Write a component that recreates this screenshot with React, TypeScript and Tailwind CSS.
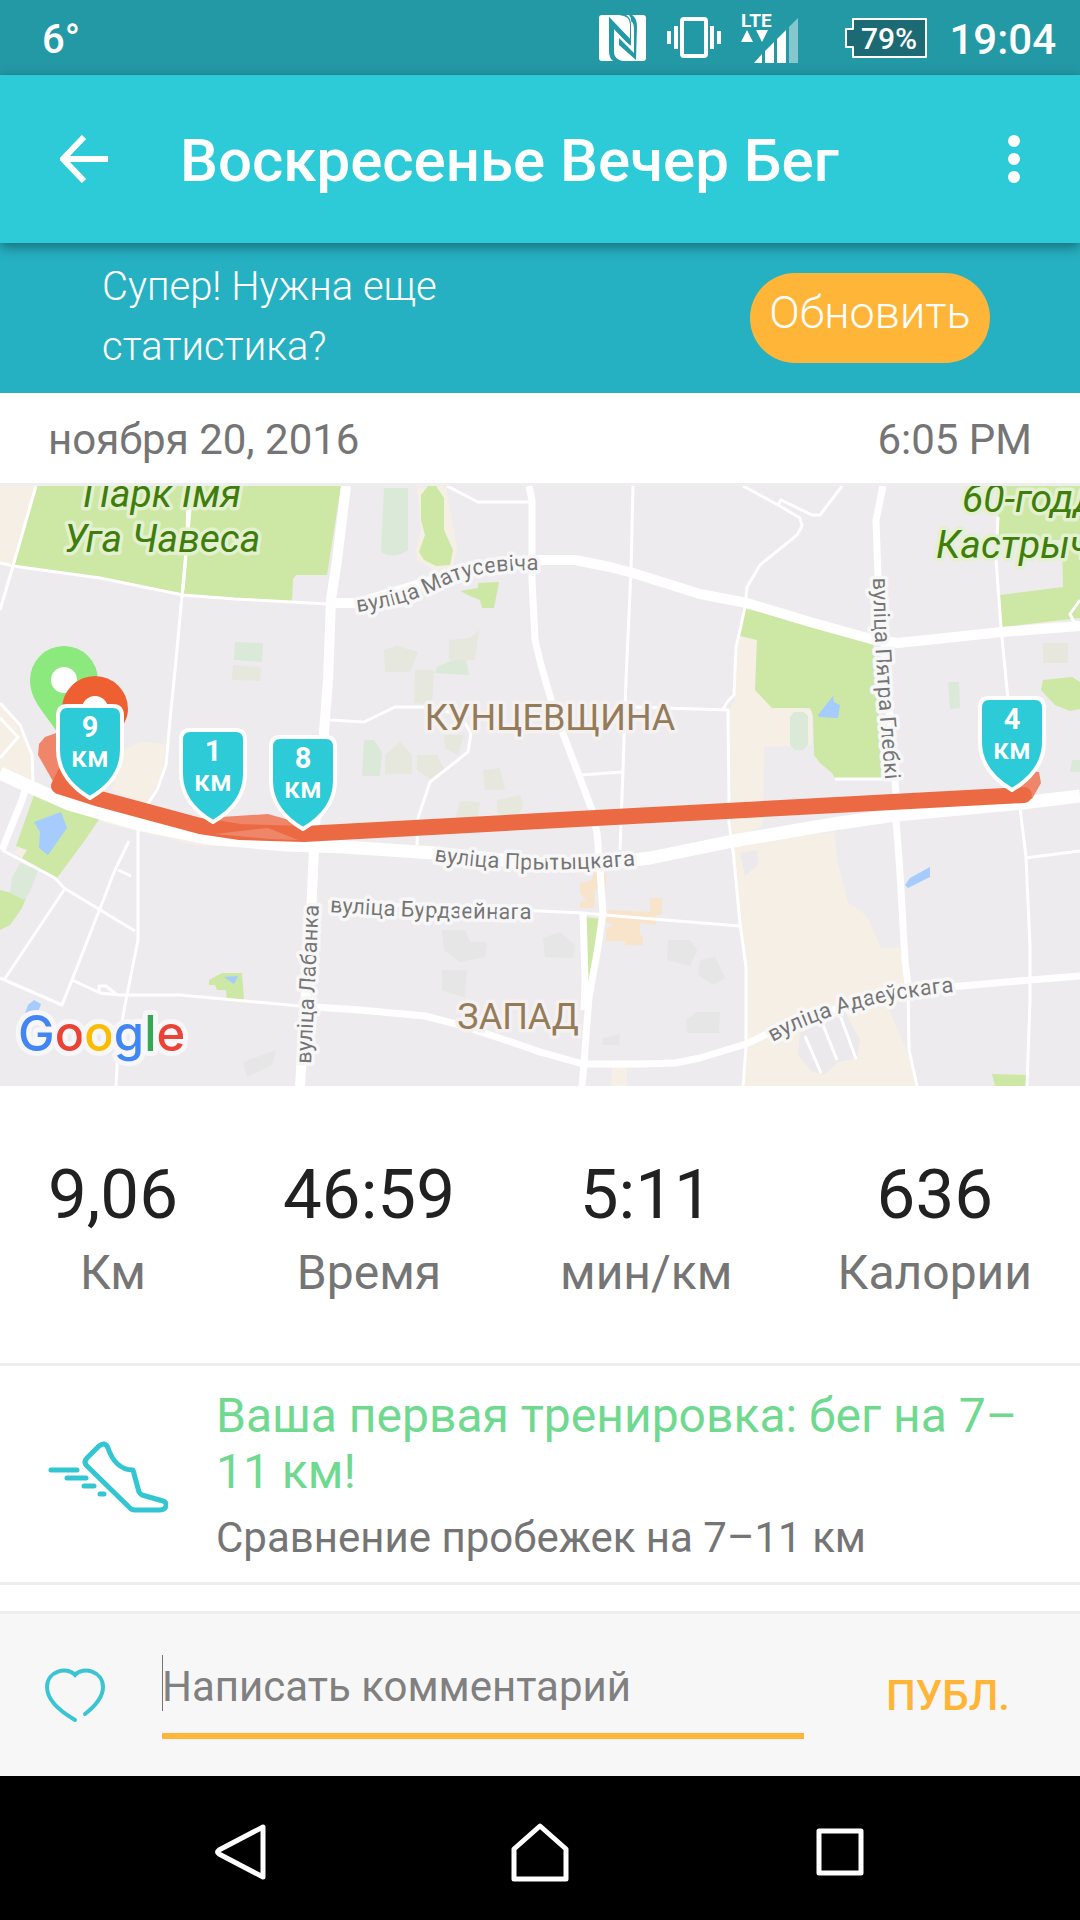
import type { ReactNode } from 'react';

const STATS = [
  { value: '9,06', label: 'Км' },
  { value: '46:59', label: 'Время' },
  { value: '5:11', label: 'мин/км' },
  { value: '636', label: 'Калории' },
];

// x / y is the tip of the badge on the map.
const KM_BADGES = [
  { km: 9, x: 90, y: 800 },
  { km: 1, x: 213, y: 824 },
  { km: 8, x: 303, y: 831 },
  { km: 4, x: 1012, y: 792 },
];

const PARKS = [
  'M36 486H341L327 575H296L293 579 292 601 235 598 183 594 100 577 13 566Z',
  'M421 495 428 486H436L444 498V530L453 550 450 565 436 566 424 560 419 552 425 535 421 520Z',
  'M460 591 478 588V583L499 582 494 608H482L480 600 470 596Z',
  'M743 608 873 641 877 680 882 778H835L832 773 820 763 814 755 813 716 810 708H772L755 690 757 640 740 636Z',
  'M998 517 1005 486H1080V618L1002 627 1000 595 1063 587 1062 540H998Z',
  'M1043 680 1072 677 1080 682V709L1070 711 1055 705 1041 690Z',
  'M34 795 100 818 85 840 57 878 22 858 27 850 16 846Z',
  'M209 980 222 973H242L244 1000H227L226 990H217L215 985H209Z',
  'M586 917 600 919 596 950 587 992Z',
  'M992 1074 1026 1075V1086H995Z',
  'M0 890 12 893 26 898 22 908 10 925 0 930Z',
];

const PALE_GREENS = [
  'M384 488H408V550Q395 560 381 552Z',
  'M235 642 263 643 262 662 234 660Z',
  'M437 667 455 659H466L469 675 435 673Z',
  'M364 740H374L382 752 380 776H362Z',
  'M794 712H804L808 716V745L803 750H794L790 744V717Z',
  'M948 682H959L960 708 950 709Z',
  'M1072 760H1080V772H1070Z',
  'M20 863 38 870 30 892 24 900 10 893 12 878Z',
];

const PALE_YELLOWS = [
  'M233 665 261 667 260 681 232 680Z',
  'M384 650 397 646 418 652 410 672H385Z',
  'M449 640 470 638 479 630 475 660H449Z',
  'M415 670H434L432 705 414 703Z',
  'M385 755 400 742 412 755V774H385Z',
  'M417 755H437L445 770 432 780 417 770Z',
  'M444 735H464L458 755 445 748Z',
  'M483 770 500 768 505 790H485Z',
  'M455 820 460 801 480 802 478 817Z',
  'M497 800 520 795 523 805 515 825 497 812Z',
  'M1043 643H1068V663H1043Z',
];

const PALE_GREYS = [
  'M442 930H465L470 942 487 942 485 957 460 962 444 950Z',
  'M442 970H467L465 998 442 990Z',
  'M243 1062 276 1050 272 1065 247 1077Z',
  'M543 938 560 932 575 945 573 958 545 957Z',
  'M668 940H690L697 950 690 966 667 960Z',
  'M700 960 715 957 725 978 713 985 698 975Z',
  'M686 1020 697 1012H720L719 1033H687Z',
  'M603 1038 620 1034 619 1045H602Z',
];

const SANDS = [
  'M0 486H36L12 566 0 562Z',
  'M0 705 18 725 33 758 32 785 0 773Z',
  'M120 752 140 742 166 744 163 770 147 806 112 790Z',
  'M95 812 145 822 260 846 200 846 100 822Z',
  'M14 852 20 847 28 852 24 860Z',
  'M738 636 757 637 755 690 772 708H800L812 710 812 745 764 747 763 825 732 840 729 710 735 700Z',
  'M733 845 834 832 838 863 848 903 860 910 869 920 881 948H900L907 985 889 1010 908 1053 916 1086H743L746 1047V967L740 923Z',
  'M1020 620 1057 616 1061 624 1020 627Z',
  'M612 1067H627V1086H611Z',
];

const BUILDINGS = [
  'M580 883 592 880 594 872 606 874V886L595 890 594 908H580V902L586 900 580 893Z',
  'M606 910 650 912V898H662V914L656 916V925L640 923V934L643 937V945H625V941H606V928L614 925 605 922Z',
];

const WATERS = [
  'M34 822 61 812 67 828 48 855 39 848 40 832Z',
  'M224 977 238 976 234 984Z',
  'M28 1005 34 1000 41 1004 38 1012 22 1022Z',
  'M818 715 833 696 834 702 840 705 838 718 819 717Z',
  'M905 885 910 878 930 867V877L908 888Z',
];

const WIDE_ROADS = [
  'M346 486 337 560 331 600 328 680 323 745 317 790 314 850 311 915 300 1086',
  'M329 603H358L440 578 500 562 540 560H575L610 567 633 573 700 594 747 603 810 622 871 639 898 643 1002 632 1080 626',
];

const MAIN_ROADS = [
  'M0 773 26 785 69 804 138 824 207 838 286 845 344 847 434 853 540 864 600 864 650 858 733 841 833 824 896 815 1022 803 1080 796',
];

const MEDIUM_ROADS = [
  'M529 486 532 500 532 580 535 640 541 665 554 710 578 773 592 810 597 833 600 870 603 913 597 953 589 997 584 1063 582 1086',
  'M883 486 876 520 878 577 884 643 890 720 896 793V820L900 873 905 960 908 985',
  'M300 1006 360 1010 425 1016 460 1025 520 1045 540 1052 583 1064H640L675 1063 700 1058 746 1044 775 1030 850 1004 950 987 1030 980 1080 976',
  'M583 912 585 980 584 1010',
  'M26 787 22 800 2 850',
];

const THIN_ROADS = [
  'M0 563 13 566 100 578 183 595 235 599 329 604',
  'M36 486 13 566 0 610',
  'M188 486 187 540 182 595 176 660 170 720 166 765 157 790 147 805',
  'M192 486 183 590',
  'M447 486 478 502H530',
  'M633 486 631 570 626 680 623 770 620 850',
  'M743 486 778 505 800 518 802 526 797 535 760 565 747 587 745 607 740 630 736 647 734 695 728 701 723 709',
  'M778 505 781 500 812 515 820 515 842 486',
  'M633 707 728 710 729 800V823L733 850 740 923 746 967V1047L743 1086',
  'M580 775 623 772',
  'M330 720 364 722 395 707H430L460 715 471 733 468 752 430 782 418 818 417 845',
  'M328 902 540 911 583 913 640 918 740 926',
  'M835 779H890',
  'M998 517 996 560 1001 627 1008 700 1020 808 1026 857 1030 947V1000L1027 1086',
  'M1025 858 1080 851',
  'M1080 600 1070 614 1074 622 1080 624',
  'M908 985 909 1050 917 1086',
  'M0 978 62 1005 72 980 115 870 129 841',
  'M72 980 100 993 120 995H180L300 1006',
  'M118 870 131 876',
  'M2 850 55 878 64 888 135 931',
  'M64 890 4 980',
  'M99 992 99 986 106 986 117 995',
  'M138 826V940L125 1005 118 1045 116 1086',
  'M0 703 20 725 32 755 33 780 27 790',
  'M0 718 18 737 0 758',
  'M805 1036 821 1073M823 1025 837 1060M840 1015 856 1059',
];

const STREETS = [
  { id: 'matusevicha', d: 'M357 612Q405 606 440 588 480 566 560 571', name: 'вуліца Матусевіча' },
  { id: 'glebki', d: 'M873 578Q874 660 887 800', name: 'вуліца Пятра Глебкі' },
  { id: 'prytytskaga', d: 'M434 861Q530 877 660 863', name: 'вуліца Прытыцкага' },
  { id: 'burdzeinaga', d: 'M330 912Q430 920 560 919', name: 'вуліца Бурдзейнага' },
  { id: 'labanka', d: 'M311 1064 320 880', name: 'вуліца Лабанка' },
  { id: 'adaeuskaga', d: 'M773 1042Q850 998 980 990', name: 'вуліца Адаеўскага' },
];

function Shapes({ paths, fill }: { paths: string[]; fill: string }) {
  return (
    <g fill={fill}>
      {paths.map((d) => <path key={d} d={d} />)}
    </g>
  );
}

function Roads({ paths, width }: { paths: string[]; width: number }) {
  return (
    <g fill="none" stroke="#fff" strokeWidth={width} strokeLinejoin="round">
      {paths.map((d) => <path key={d} d={d} />)}
    </g>
  );
}

function KmBadge({ km, x, y }: { km: number; x: number; y: number }) {
  return (
    <g transform={`translate(${x} ${y})`} fill="#fff" textAnchor="middle">
      <path
        d="M-23-94H23Q32-94 32-84V-50C32-28 17-12 0-2-17-12-32-28-32-50V-84Q-32-94-23-94Z"
        fill="#2dcad7"
        stroke="#fff"
        strokeWidth="4"
        strokeLinejoin="round"
      />
      <text y="-63" fontSize="29" fontWeight="700">{km}</text>
      <text y="-33" fontSize="29" fontWeight="500">км</text>
    </g>
  );
}

function RouteMap() {
  return (
    <svg
      viewBox="0 486 1080 600"
      className="block h-auto w-full bg-[#edebee] font-[Roboto,sans-serif]"
      role="img"
      aria-label="Маршрут пробежки"
    >
      <Shapes paths={SANDS} fill="#f6efe6" />
      <path d="M417 488 446 486 457 548 453 568 436 571 417 560 416 550 421 530Z" fill="#f6efe6" />
      <Shapes paths={PARKS} fill="#cde7a5" />
      <Shapes paths={PALE_GREENS} fill="#dbe9d8" />
      <Shapes paths={PALE_YELLOWS} fill="#e6e7dd" />
      <Shapes paths={PALE_GREYS} fill="#e5e6e5" />
      <Shapes paths={BUILDINGS} fill="#f7e4cb" />
      <Shapes paths={WATERS} fill="#a5cbff" />
      <path d="M800 1033 845 1012 860 1040 857 1058 838 1062 825 1074 812 1072 798 1055ZM740 853 757 850 758 865 745 876Z" fill="#ebe9ec" />

      <Roads paths={THIN_ROADS} width={3} />
      <Roads paths={MEDIUM_ROADS} width={7} />
      <Roads paths={WIDE_ROADS} width={10} />
      <Roads paths={MAIN_ROADS} width={13} />

      {/* Labels, each with a pale halo */}
      <defs>
        {STREETS.map((s) => <path key={s.id} id={`street-${s.id}`} d={s.d} />)}
      </defs>
      <g strokeWidth="7" strokeLinejoin="round" paintOrder="stroke">
        <g fill="#3f7d0c" stroke="#e3f1d0" fontSize="39" fontStyle="italic">
          <text x="162" y="507" textAnchor="middle">Парк Імя</text>
          <text x="162" y="552" textAnchor="middle">Уга Чавеса</text>
          <text x="962" y="512">60-годдзя</text>
          <text x="936" y="558">Кастрычніка</text>
        </g>
        <g fill="#957b5a" stroke="#f4f1f1" fontSize="36" textAnchor="middle">
          <text x="550" y="730">КУНЦЕВЩИНА</text>
          <text x="518" y="1029">ЗАПАД</text>
        </g>
        <g fill="#757575" stroke="#f8f7f8" fontSize="22">
          {STREETS.map((s) => (
            <text key={s.id}>
              <textPath href={`#street-${s.id}`}>{s.name}</textPath>
            </text>
          ))}
        </g>
      </g>

      {/* Route */}
      <path d="M45 737 62 731 68 765 58 790 38 755 39 744Z" fill="#ef866a" />
      <path d="M205 818 268 814 310 826 268 834ZM1018 770 1039 772 1041 783 1032 799 1020 795Z" fill="#ef866a" />
      <path
        d="M66 772 59 786 100 799 200 826 240 832 304 834 540 821 1024 795"
        fill="none"
        stroke="#ec6a43"
        strokeWidth="16"
        strokeLinecap="round"
        strokeLinejoin="round"
      />
      <path d="M215 834 268 828 298 840 270 839Z" fill="#ef866a" />

      {/* Start and finish pins */}
      <path d="M64 646A34 34 0 0 1 98 680C98 705 76 720 64 745 52 718 30 705 30 680A34 34 0 0 1 64 646Z" fill="#8ce97e" />
      <circle cx="64" cy="680" r="13" fill="#fff" />
      <path d="M95 676A33 33 0 0 1 128 709C128 728 107 742 95 770 83 742 62 728 62 709A33 33 0 0 1 95 676Z" fill="#ee6031" />
      <circle cx="95" cy="709" r="13" fill="#fff" />
      {KM_BADGES.map((b) => <KmBadge key={b.km} {...b} />)}

      <text
        x="18"
        y="1051"
        fontSize="49"
        fontWeight="500"
        stroke="#f7f6f8"
        strokeWidth="10"
        strokeLinejoin="round"
        paintOrder="stroke"
        className="font-[Inter,sans-serif]"
      >
        <tspan fill="#4285f4">G</tspan>
        <tspan fill="#ea4335">o</tspan>
        <tspan fill="#fbbc05">o</tspan>
        <tspan fill="#4285f4">g</tspan>
        <tspan fill="#34a853">l</tspan>
        <tspan fill="#ea4335">e</tspan>
      </text>
    </svg>
  );
}

function StatusBar() {
  return (
    <div className="flex h-[75px] items-center bg-[#2399a6] pr-6 pl-[42px] text-white">
      <span className="pt-1 text-[40px] leading-none font-medium">6°</span>
      <div className="ml-auto flex items-center">
        {/* NFC */}
        <svg width="47" height="46" viewBox="0 0 47 46" fill="#fff" aria-hidden="true">
          <path d="M3 0H20Q31 1 31 9V24L10 2V36Q10 43 14 46H3Q0 46 0 43V3Q0 0 3 0Z" />
          <path d="M33 0H44Q47 0 47 3V43Q47 46 44 46H25Q15 45 15 36V14L32 31V22L37 28V44L37 10Q37 3 33 0Z" />
          <path d="M15 14 37 42V46H25Q15 45 15 36Z" />
          <path d="M10 2 31 24V31L15 14V40Q10 40 10 30Z" fill="#2399a6" />
          <path d="M15 17 37 44V10Q37 3 33 0H27Q32 3 32 10V31Z" fill="#fff" />
          <path d="M32 6Q35 8 35 14V38L20 23V30L37 45 38 12Q38 3 33 0H30Q32 2 32 6Z" fill="#2399a6" />
        </svg>
        {/* Vibrate */}
        <svg width="54" height="42" viewBox="0 0 54 42" className="ml-[21px]" fill="#fff" aria-hidden="true">
          <rect x="15" y="2" width="24" height="37" rx="2" fill="none" stroke="#fff" strokeWidth="4" />
          <path d="M0 14H4V27H0ZM7 9H11V32H7ZM43 9H47V32H43ZM50 14H54V27H50Z" />
        </svg>
        {/* Signal */}
        <svg width="58" height="52" viewBox="0 0 58 52" className="ml-5" fill="#fff" aria-hidden="true">
          <text x="0" y="15" fontSize="19" fontWeight="700" className="font-[Roboto,sans-serif]">LTE</text>
          <path d="M0 30 6 18 12 30ZM15 18H27L21 30Z" />
          <path d="M13 51 21 42V51ZM24 39 33 30V51H24ZM36 27 45 18V51H36Z" />
          <path d="M48 15 57 6V51H48Z" opacity=".45" />
        </svg>
        {/* Battery */}
        <svg width="82" height="40" viewBox="0 0 82 40" className="ml-[46px]" aria-hidden="true">
          <path d="M8 1H81V39H8V29H1V11H8Z" fill="#1c6b74" stroke="#fff" strokeWidth="2" strokeLinejoin="round" />
          <text x="44" y="31" fontSize="30" fontWeight="500" fill="#fff" textAnchor="middle" className="font-[Roboto,sans-serif]">79%</text>
        </svg>
        <span className="ml-[22px] pt-1 text-[42px] leading-none font-medium">19:04</span>
      </div>
    </div>
  );
}

function NavButton({ label, children }: { label: string; children: ReactNode }) {
  return (
    <button type="button" aria-label={label} className="flex h-full w-[120px] items-center justify-center">
      <svg width="64" height="64" viewBox="0 0 64 64" fill="none" stroke="#fff" strokeWidth="6" strokeLinejoin="round" aria-hidden="true">
        {children}
      </svg>
    </button>
  );
}

export default function App() {
  return (
    <div className="flex min-h-screen flex-col bg-white font-[Roboto,sans-serif]">
      <StatusBar />

      <header className="relative z-10 flex h-[168px] items-center bg-[#2dcad7] pr-12 pl-[60px] text-white shadow-[0_4px_12px_rgba(0,0,0,0.4)]">
        <button type="button" aria-label="Назад">
          <svg width="48" height="48" viewBox="0 0 48 48" fill="none" stroke="#fff" strokeWidth="6" aria-hidden="true">
            <path d="M24 2 3 24 24 46M3 24H48" />
          </svg>
        </button>
        <h1 className="ml-[72px] flex-1 pt-1 text-[60px] leading-none font-medium">Воскресенье Вечер Бег</h1>
        <button type="button" aria-label="Ещё" className="px-3">
          <svg width="12" height="48" viewBox="0 0 12 48" fill="#fff" aria-hidden="true">
            <circle cx="6" cy="6" r="6" />
            <circle cx="6" cy="24" r="6" />
            <circle cx="6" cy="42" r="6" />
          </svg>
        </button>
      </header>

      <section className="flex h-[150px] items-center justify-between bg-[#26b1c3] pr-[90px] pl-[102px] text-white">
        <p className="w-[400px] pb-0.5 text-[40px] leading-[60px] font-light">Супер! Нужна еще статистика?</p>
        <button type="button" className="h-[90px] w-60 rounded-full bg-[#ffb638] pb-3 text-[45px] leading-none font-light">
          Обновить
        </button>
      </section>

      <div className="flex h-[93px] items-center justify-between border-b-3 border-[#eeeeee] px-12 pt-0.5 text-[42px] text-[#757575]">
        <span>ноября 20, 2016</span>
        <span>6:05 PM</span>
      </div>

      <RouteMap />

      <dl className="flex h-[277px] items-center justify-between px-12 text-center">
        {STATS.map((s) => (
          <div key={s.label} className="flex flex-col-reverse">
            <dt className="text-[48px] leading-[60px] text-[#757575]">{s.label}</dt>
            <dd className="text-[69px] leading-[96px] text-[#212121]">{s.value}</dd>
          </div>
        ))}
      </dl>

      <section className="flex items-center border-y-3 border-[#eeeeee] pt-[22px] pr-12 pb-4 pl-12">
        <svg width="120" height="72" viewBox="0 0 120 72" fill="none" stroke="#32c6d3" strokeWidth="5" strokeLinecap="round" strokeLinejoin="round" className="shrink-0" aria-hidden="true">
          <path d="M51 5 39 17Q35 21 39 25L83 68Q85 69 87 69H112C119 69 120 61 115 60L94 54Q92 53 91 51L85 29C72 29 64 19 60 7Q57 0 51 5Z" />
          <path d="M3 29H29M19 37H38M36 45H46M52 53H56" />
        </svg>
        <div className="ml-12">
          <h2 className="text-[48px] leading-14 text-[#6fd98f]">Ваша первая тренировка: бег на 7–11 км!</h2>
          <p className="mt-2.5 text-[42px] leading-14 text-[#757575]">Сравнение пробежек на 7–11 км</p>
        </div>
      </section>

      <form className="mt-auto flex h-[165px] items-center border-t-3 border-[#eeeeee] bg-[#f7f7f7] pr-[70px] pl-[45px]" onSubmit={(e) => e.preventDefault()}>
        <button type="button" aria-label="Нравится">
          <svg width="62" height="56" viewBox="0 0 62 56" fill="none" stroke="#3bc5d2" strokeWidth="4" strokeLinecap="round" aria-hidden="true">
            <path d="M30 53C18 46 2 34 2 20 2 4 22-1 30 8 38-1 58 4 58 20 58 31 49 40 40 47" />
          </svg>
        </button>
        <div className="relative ml-[55px] flex-1 border-b-6 border-[#ffb638]">
          <span className="absolute top-1 left-0 h-14 w-px bg-[#757575]" />
          <input
            type="text"
            aria-label="Комментарий"
            placeholder="Написать комментарий"
            className="block h-[82px] w-full bg-transparent pb-3 text-[42px] text-[#212121] outline-none placeholder:text-[#808080]"
          />
        </div>
        <button type="submit" className="ml-[82px] text-[42px] font-medium text-[#ffb638]">ПУБЛ.</button>
      </form>

      <nav className="flex h-36 items-center justify-between bg-black px-[180px] pt-2">
        <NavButton label="Назад">
          <path d="M55 7V57L11 34Q8 32 11 30Z" strokeWidth="5" />
        </NavButton>
        <NavButton label="Домой">
          <path d="M6 59V29L32 6 58 29V59Z" strokeWidth="5" />
        </NavButton>
        <NavButton label="Недавние приложения">
          <path d="M11 11H53V53H11Z" strokeWidth="5" />
        </NavButton>
      </nav>
    </div>
  );
}
